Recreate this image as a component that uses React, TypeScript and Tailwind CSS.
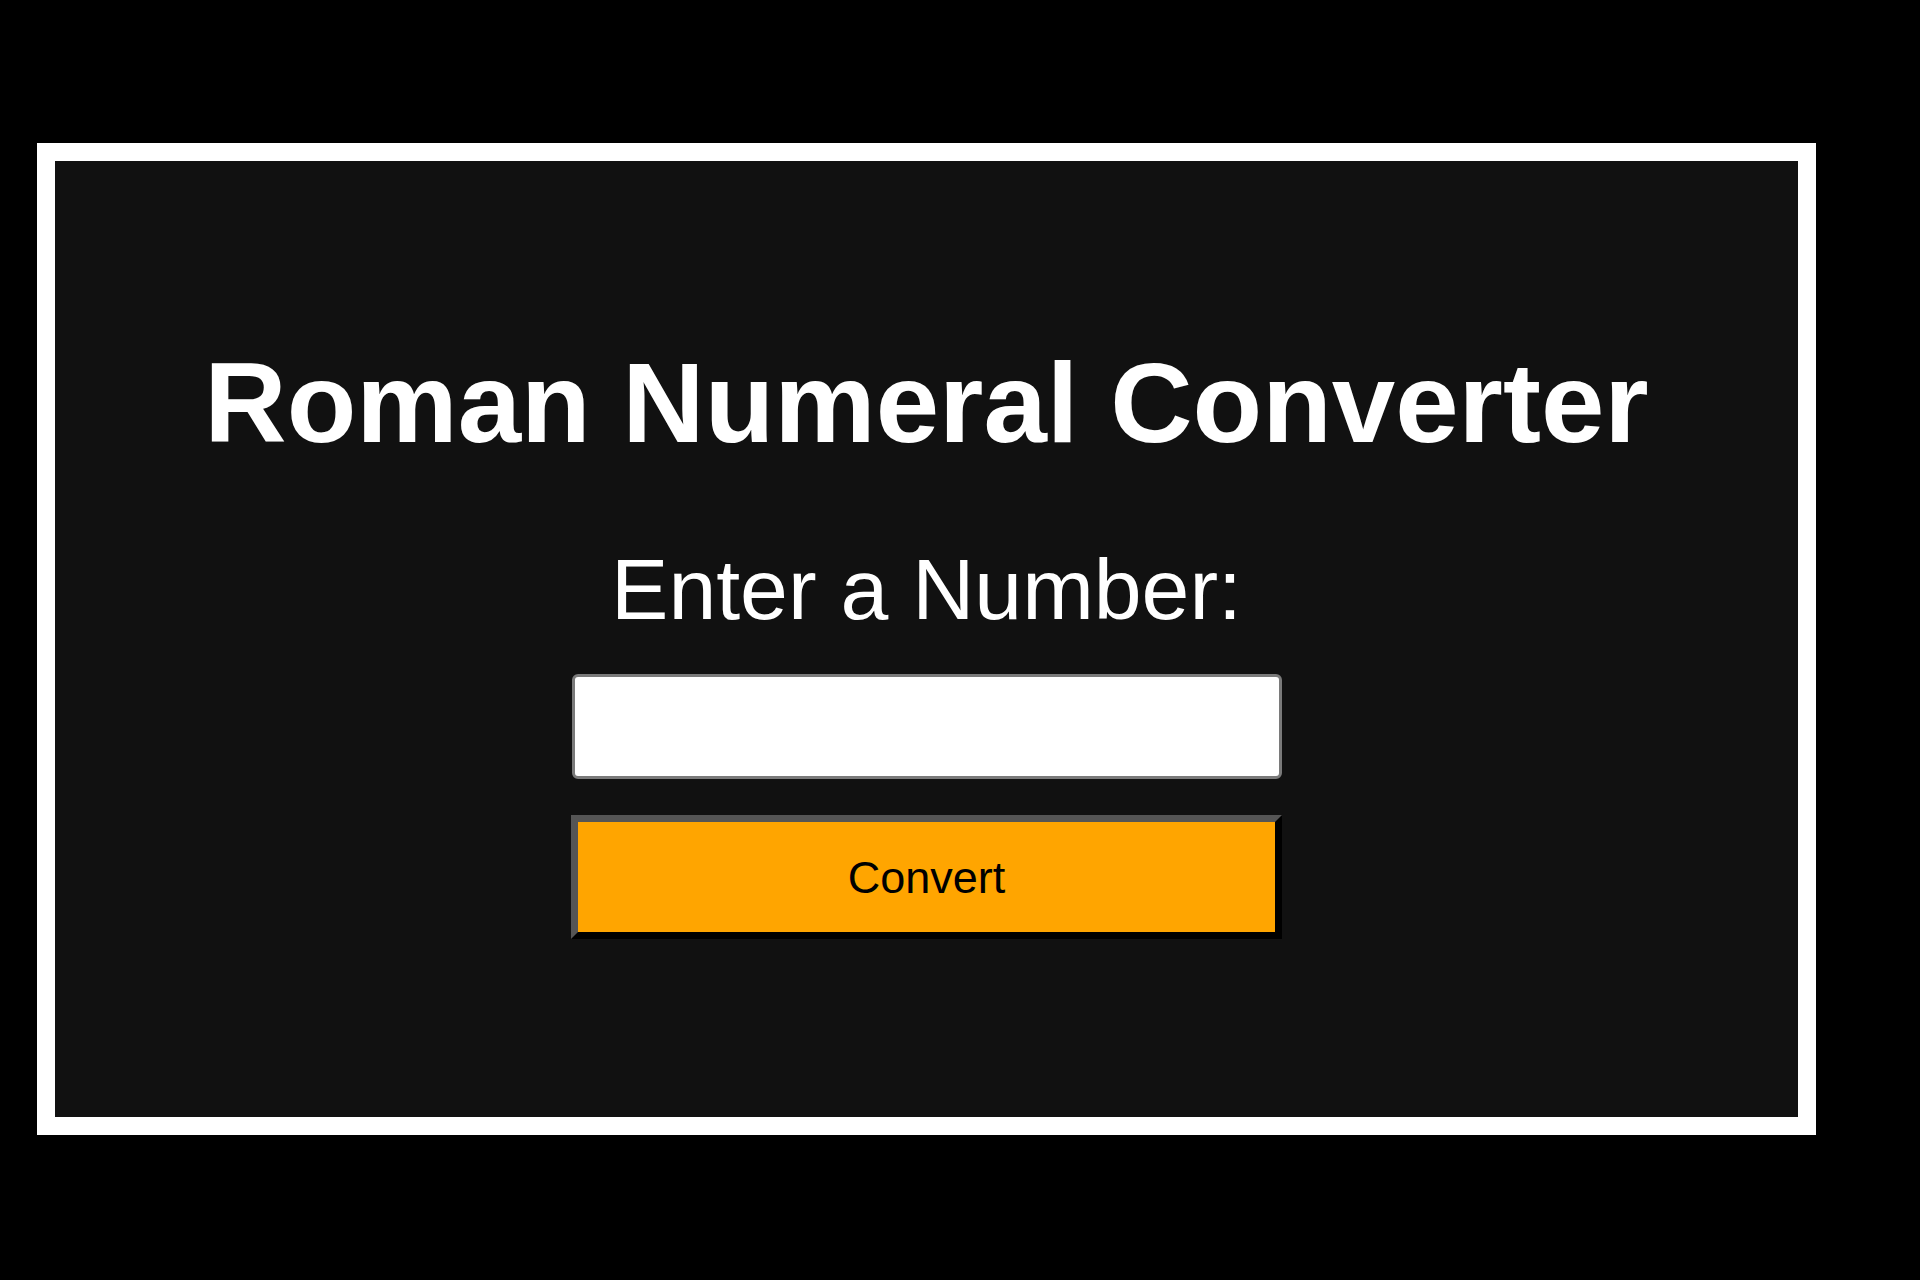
import React from "react";

export default function App() {
  const font = { fontFamily: '"Liberation Sans", Arial, sans-serif' };
  return (
    <div className="min-h-screen w-full bg-black pt-[143px] pl-[37px]" style={font}>
      <div className="w-[1779px] h-[992px] border-[18px] border-white bg-[#111111] flex flex-col items-center pt-[185px] box-border">
        <h1 className="text-[114px] leading-none font-bold text-white m-0">Roman Numeral Converter</h1>
        <label
          htmlFor="num"
          className="mt-[86px] text-[86px] leading-none text-white block"
          style={font}
        >
          Enter a Number:
        </label>
        <input
          id="num"
          type="text"
          className="mt-[42px] w-[710px] h-[105px] bg-white border-[3px] border-[#7a7a7a] rounded-[6px] box-border outline-none"
        />
        <button
          type="button"
          className="mt-[36px] w-[711px] h-[124px] bg-[#ffa500] text-black text-[45px] leading-none border-[7px] border-t-[#555555] border-l-[#555555] border-b-black border-r-black box-border"
          style={font}
        >
          Convert
        </button>
      </div>
    </div>
  );
}
